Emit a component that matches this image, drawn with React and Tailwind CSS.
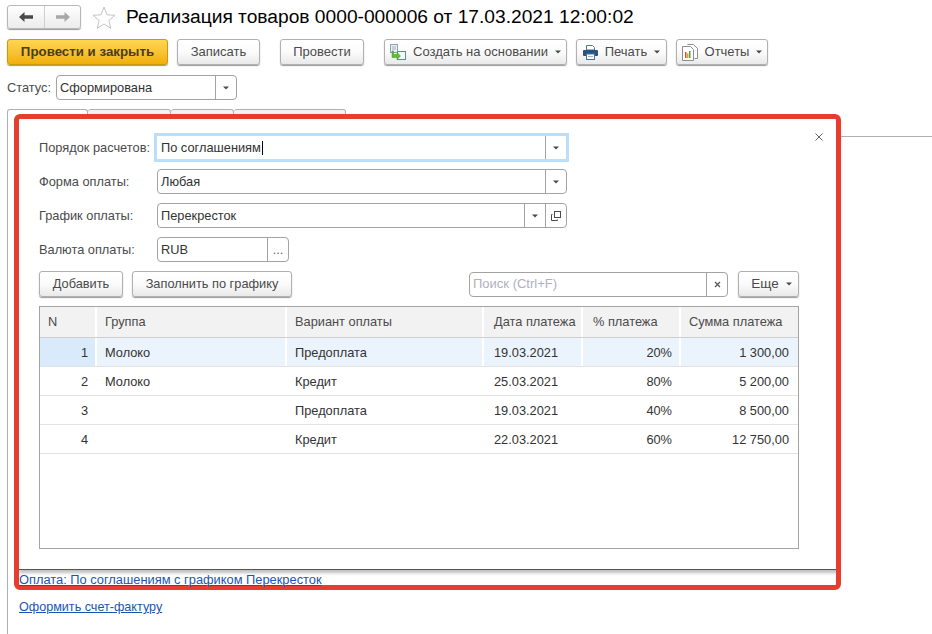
import React from "react";

const Caret = ({ className = "" }) => (
  <svg width="6" height="4" viewBox="0 0 6 4" className={className}>
    <path d="M0 .5h6L3 3.500z" fill="#4a4a4a" />
  </svg>
);

const Button = ({ className = "", children }) => (
  <div className={`flex h-[26px] shrink-0 items-center justify-center rounded-[3px] border border-[#b0b0b0] bg-gradient-to-b from-white via-[#fbfbfb] to-[#e9e9e9] text-[#4a4a4a] shadow-[0_1px_1px_#9a9a9a] ${className}`}>
    {children}
  </div>
);

const ArrowIcon = ({ flip, color }) => (
  <svg width="14" height="10" viewBox="0 0 14 10" className={flip ? "-scale-x-100" : ""}>
    <path d="M0 5l5.500-5v3.300H14v3.400H5.500V10z" fill={color} />
  </svg>
);

const BasedOnIcon = () => (
  <svg width="16" height="16" viewBox="0 0 16 16">
    <rect x="0.500" y="0.500" width="7" height="8" fill="#e6eef6" stroke="#8fa3b5" />
    <path d="M2 3h4M2 5h4" stroke="#9fb0bf" />
    <rect x="7.500" y="7.500" width="8" height="8" fill="#f4f8fb" stroke="#5e8aa8" />
    <path d="M3.500 7v3.500h3.500V8.500l3.500 3.500-3.500 3.500v-2H2V7z" fill="#5fbf2a" stroke="#3f9a14" strokeWidth="0.500" />
  </svg>
);

const PrintIcon = () => (
  <svg width="15" height="15" viewBox="0 0 15 15">
    <path d="M3.500.5h6l2 2V5h-8z" fill="#fff" stroke="#4d7396" />
    <rect x="0" y="5" width="15" height="6" rx="1" fill="#27557f" />
    <rect x="3.500" y="9" width="8" height="5.500" fill="#fff" stroke="#4d7396" />
    <path d="M5 11.500h5" stroke="#9db3c6" />
  </svg>
);

const ReportIcon = () => (
  <svg width="16" height="17" viewBox="0 0 16 17">
    <path d="M5.500.5h6l4 4v10h-3" fill="#fff" stroke="#8c8c8c" />
    <path d="M.5 2.500h8l3 3v11h-11z" fill="#fff" stroke="#8c8c8c" />
    <rect x="3" y="8" width="1.500" height="6" fill="#e2492f" />
    <rect x="5" y="9.500" width="1.500" height="4.500" fill="#e8a01f" />
    <rect x="7" y="7" width="1.500" height="7" fill="#4fa83d" />
  </svg>
);

const Field = ({ className = "", value, buttons }) => (
  <div className={`flex h-[25px] shrink-0 items-stretch rounded-[4px] border border-[#a3a3a3] bg-white ${className}`}>
    <div className="flex flex-1 items-center pl-[3px] text-[#333]">{value}</div>
    {buttons}
  </div>
);

const CaretCell = () => (
  <div className="flex w-[21px] items-center justify-center border-l border-[#a3a3a3]">
    <Caret />
  </div>
);

const FormRow = ({ label, className = "", children }) => (
  <div className={`flex items-center ${className}`}>
    <div className="w-[118px] text-[#4b4b4b]">{label}</div>
    {children}
  </div>
);

const columns = ["w-[57px]", "w-[190px]", "w-[197px]", "w-[99px]", "w-[98px]", "flex-1"];
const headerPad = ["pl-[8px]", "pl-[8px]", "pl-[8px]", "pl-[10px]", "pl-[10px]", "pl-[8px]"];

const rows = [
  ["1", "Молоко", "Предоплата", "19.03.2021", "20%", "1 300,00"],
  ["2", "Молоко", "Кредит", "25.03.2021", "80%", "5 200,00"],
  ["3", "", "Предоплата", "19.03.2021", "40%", "8 500,00"],
  ["4", "", "Кредит", "22.03.2021", "60%", "12 750,00"],
];

const headers = ["N", "Группа", "Вариант оплаты", "Дата платежа", "% платежа", "Сумма платежа"];

const Table = () => (
  <div className="mt-[9px] flex h-[243px] flex-col border border-[#a3a3a3]">
    <div className="flex h-[31px] shrink-0 border-b border-[#cfcfcf] text-[#4b4b4b]">
      {headers.map((h, i) => (
        <div key={h} className={`${columns[i]} ${headerPad[i]} flex items-center whitespace-nowrap bg-[#f2f2f2] ${i < 5 ? "border-r-2 border-white" : ""}`}>
          {h}
        </div>
      ))}
    </div>
    {rows.map((row, r) => (
      <div key={row[0]} className={`flex h-[29px] shrink-0 border-b border-[#e3e3e3] text-[#333] ${r === 0 ? "bg-[#ebf4fc]" : "bg-white"}`}>
        {row.map((cell, i) => {
          const right = i === 0 || i > 3;
          return (
            <div key={i} className={`${columns[i]} flex items-center pt-[1px] ${r === 0 && i < 5 ? "border-r-2 border-white" : "border-r-2 border-transparent"} ${r === 0 && i === 0 ? "bg-[#d9ebfa]" : ""} ${right ? "justify-end pr-[7px]" : i === 3 ? "pl-[10px]" : "pl-[8px]"}`}>
              {cell}
            </div>
          );
        })}
      </div>
    ))}
  </div>
);

export default function App() {
  return (
    <div className="relative h-[634px] w-[932px] overflow-hidden bg-white text-[12.800px] leading-[20px] font-['Liberation_Sans',Arial,sans-serif]">
      {/* title */}
      <div className="flex items-center pl-[7px] pt-[5px]">
        <div className="flex h-[24px] w-[74px] rounded-[3px] border border-[#b8b8b8] bg-gradient-to-b from-white to-[#ececec] shadow-[0_1px_1px_#9a9a9a]">
          <div className="flex w-[37px] items-center justify-center border-r border-[#d0d0d0]">
            <ArrowIcon color="#4a4a4a" />
          </div>
          <div className="flex flex-1 items-center justify-center">
            <ArrowIcon flip color="#a8a8a8" />
          </div>
        </div>
        <svg width="24" height="23" viewBox="0 0 24 23" className="ml-[11px]">
          <path d="M12 1l3 7.800 8 .5-6.200 5.200 2 7.800L12 18l-6.800 4.300 2-7.800L1 9.300l8-.5z" fill="#fff" stroke="#c4c4c4" />
        </svg>
        <h1 className="ml-[10px] whitespace-nowrap text-[19.200px] leading-[24px] text-black">Реализация товаров 0000-000006 от 17.03.2021 12:00:02</h1>
      </div>

      {/* command bar */}
      <div className="mt-[10px] flex pl-[7px] text-[13px]">
        <div className="flex h-[26px] w-[161px] items-center justify-center rounded-[3px] border border-[#c99a10] bg-gradient-to-b from-[#ffd64f] to-[#f0b000] text-[13.300px] font-bold text-[#4a3d1a] shadow-[0_1px_1px_#9a9a9a]">Провести и закрыть</div>
        <Button className="ml-[9px] w-[83px]">Записать</Button>
        <Button className="ml-[20px] w-[84px]">Провести</Button>
        <Button className="ml-[20px] w-[183px] gap-[7px]"><BasedOnIcon />Создать на основании<Caret /></Button>
        <Button className="ml-[9px] w-[91px] gap-[7px]"><PrintIcon />Печать<Caret /></Button>
        <Button className="ml-[9px] w-[92px] gap-[7px]"><ReportIcon />Отчеты<Caret /></Button>
      </div>

      {/* status */}
      <div className="mt-[10px] flex items-center pl-[7px]">
        <div className="w-[49px] text-[#4b4b4b]">Статус:</div>
        <Field className="w-[181px]" value="Сформирована" buttons={<CaretCell />} />
      </div>

      {/* tabs */}
      <div className="mt-[9px] flex h-[28px] pl-[7px]">
        <div className="h-[28px] w-[81px] rounded-t-[3px] border border-b-0 border-[#b0b0b0] bg-white" />
        <div className="h-[27px] w-[83px] rounded-t-[3px] border border-l-0 border-[#b0b0b0] bg-[#f2f2f2]" />
        <div className="h-[27px] w-[63px] rounded-t-[3px] border border-l-0 border-[#b0b0b0] bg-[#f2f2f2]" />
        <div className="h-[27px] w-[112px] rounded-t-[3px] border border-l-0 border-[#b0b0b0] bg-[#f2f2f2]" />
        <div className="mt-[27px] h-px flex-1 bg-[#b0b0b0]" />
      </div>

      {/* tab body */}
      <div className="ml-[7px] flex h-[497px] flex-col gap-[7px] border-l border-[#b0b0b0] pl-[11px] pt-[433px] text-[#1a56b0]">
        <a className="relative z-10 text-[12.850px] underline">Оплата: По соглашениям с графиком Перекресток</a>
        <a className="text-[12.600px] underline">Оформить счет-фактуру</a>
      </div>

      {/* payment popup */}
      <div className="absolute left-[16px] top-[115px] flex h-[455px] w-[821px] flex-col border-b border-[#555] bg-white pl-[23px] pr-[38px] pt-[18px] shadow-[3px_3px_3px_rgba(0,0,0,0.25)]">
        <div className="absolute right-[14px] top-[18px]">
          <svg width="8" height="8" viewBox="0 0 8 8" className="block"><path d="M.5.5l7 7M7.500.5l-7 7" stroke="#666" /></svg>
        </div>
        <FormRow label="Порядок расчетов:">
          <div className="-ml-[3px] flex h-[29px] w-[415px] items-center border-[3px] border-[#bbdefb] bg-white">
            <div className="flex flex-1 items-center pl-[4px] text-[#333]">По соглашениям<span className="ml-px h-[14px] w-px bg-black" /></div>
            <div className="flex h-[23px] w-[21px] items-center justify-center border-l border-[#a3a3a3]"><Caret /></div>
          </div>
        </FormRow>
        <FormRow label="Форма оплаты:" className="mt-[7px]">
          <Field className="w-[410px]" value="Любая" buttons={<CaretCell />} />
        </FormRow>
        <FormRow label="График оплаты:" className="mt-[9px]">
          <Field
            className="w-[410px]"
            value="Перекресток"
            buttons={
              <>
                <CaretCell />
                <div className="flex w-[21px] items-center justify-center border-l border-[#a3a3a3]">
                  <svg width="10" height="10" viewBox="0 0 10 10" fill="none" stroke="#4a4a4a">
                    <rect x="3.500" y="0.500" width="6" height="6" />
                    <path d="M1.500 3.500h-1v6h6v-1" />
                  </svg>
                </div>
              </>
            }
          />
        </FormRow>
        <FormRow label="Валюта оплаты:" className="mt-[9px]">
          <Field
            className="w-[132px]"
            value="RUB"
            buttons={<div className="flex w-[21px] items-center justify-center border-l border-[#a3a3a3] text-[#666]">...</div>}
          />
        </FormRow>

        <div className="mt-[9px] flex items-center">
          <Button className="w-[84px]">Добавить</Button>
          <Button className="ml-[9px] w-[160px]">Заполнить по графику</Button>
          <div className="ml-[177px] flex h-[25px] w-[259px] items-stretch rounded-[4px] border border-[#a3a3a3]">
            <div className="flex flex-1 items-center pl-[3px] text-[13px] text-[#b0b0c0]">Поиск (Ctrl+F)</div>
            <div className="flex w-[21px] items-center justify-center border-l border-[#a3a3a3]">
              <svg width="7" height="7" viewBox="0 0 7 7"><path d="M1 1l5 5M6 1L1 6" stroke="#555" strokeWidth="1.200" /></svg>
            </div>
          </div>
          <Button className="ml-[10px] w-[61px] gap-[7px] pl-[6px] text-[13.500px]">Еще<Caret /></Button>
        </div>

        <Table />
      </div>

      {/* red annotation frame */}
      <div className="pointer-events-none absolute left-[14px] top-[114px] h-[476px] w-[827px] rounded-[6px] border-[5px] border-[#e53e30]" />
    </div>
  );
}
